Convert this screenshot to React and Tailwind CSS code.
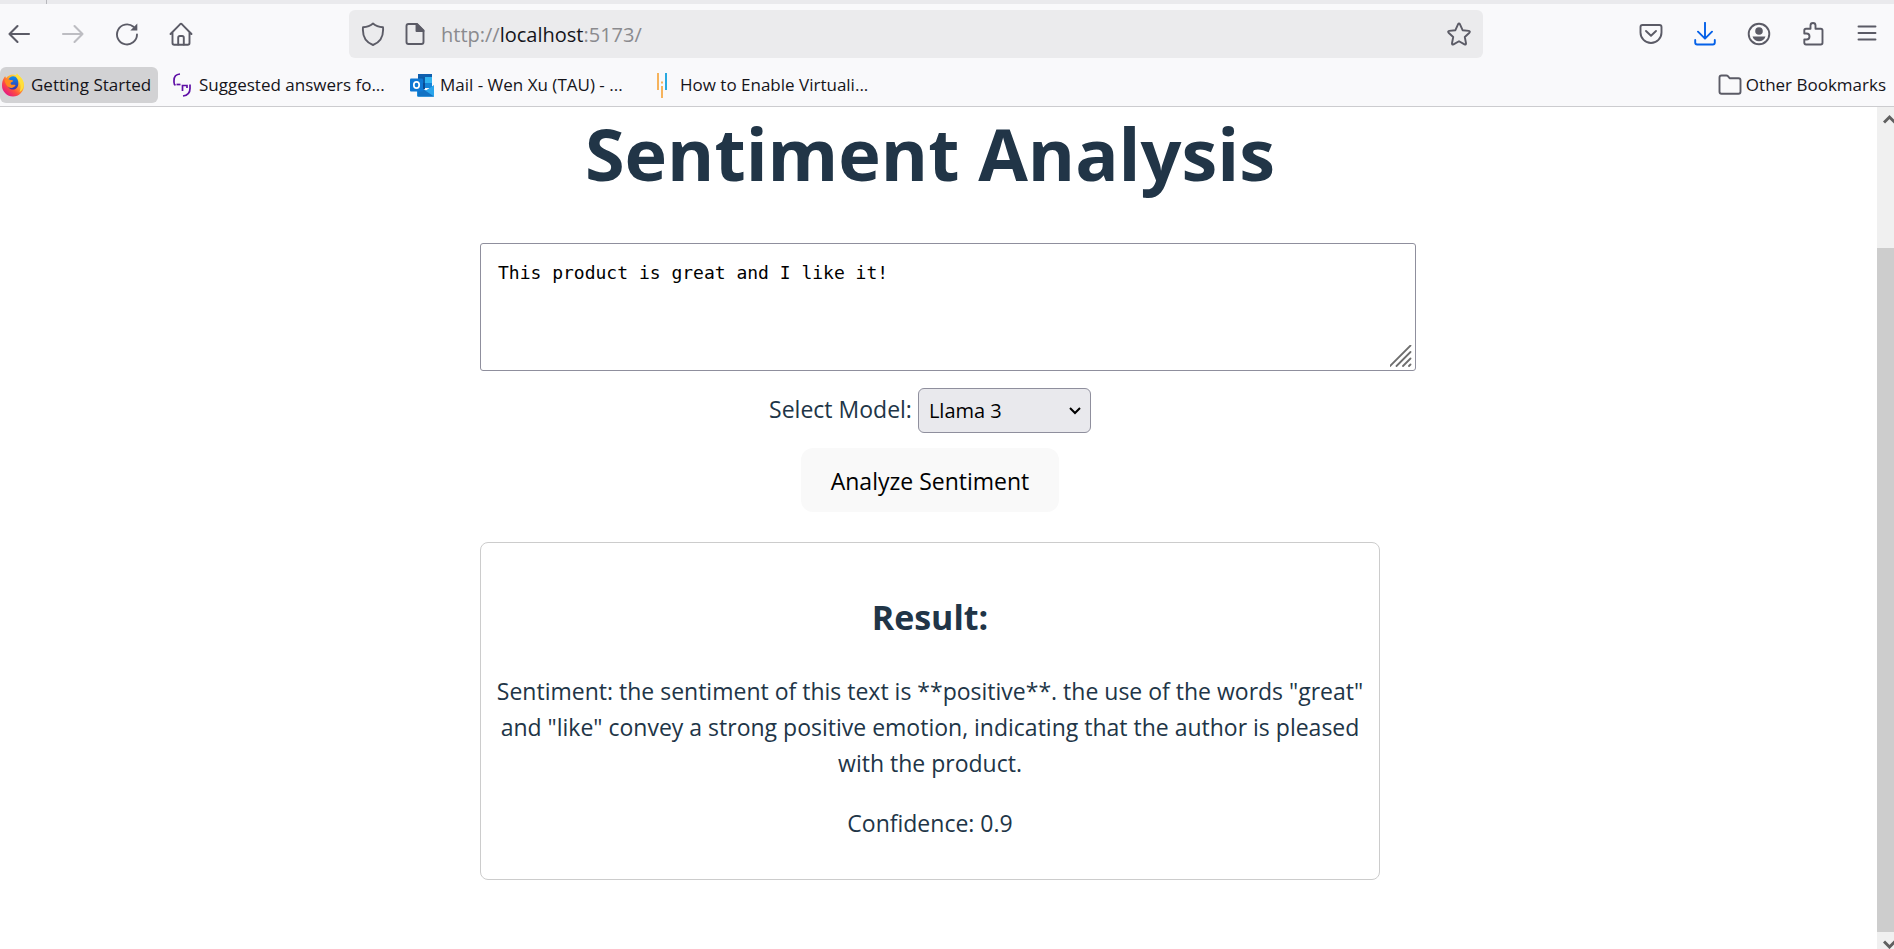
import { useState } from "react";

function Icon({ children, className = "text-[#5b5b66]", size = "size-6" }) {
  return (
    <svg
      viewBox="0 0 24 24"
      className={`${size} shrink-0 ${className}`}
      fill="none"
      stroke="currentColor"
      strokeWidth="1.9"
      strokeLinecap="round"
      strokeLinejoin="round"
      aria-hidden="true"
    >
      {children}
    </svg>
  );
}

function ToolButton({ label, children, disabled }) {
  return (
    <button type="button" aria-label={label} disabled={disabled} className="flex h-12 w-[54px] items-center justify-center">
      {children}
    </button>
  );
}

function FirefoxLogo() {
  return (
    <svg viewBox="0 0 24 24" className="size-6 shrink-0" aria-hidden="true">
      <defs>
        <linearGradient id="ffBody" x1="0.85" y1="0.1" x2="0.15" y2="0.9">
          <stop offset="0" stopColor="#fff44f" />
          <stop offset="0.35" stopColor="#ffb02a" />
          <stop offset="0.65" stopColor="#ff4f3d" />
          <stop offset="1" stopColor="#e31587" />
        </linearGradient>
        <linearGradient id="ffGlobe" x1="0.5" y1="0" x2="0.5" y2="1">
          <stop offset="0" stopColor="#0a8cf0" />
          <stop offset="1" stopColor="#3a2fa8" />
        </linearGradient>
      </defs>
      <path
        d="M2.8 5.2C3.2 4.4 3.7 3.8 4.3 3.3c.1.8.4 1.3.9 1.8C7 3 9.5 1.8 12 1.6l3.5.6C15.3 1.6 15.5 1 16 .6c.9 1.7 2.6 2.6 3.8 3.9 2 2.1 3.2 4.8 3.2 8A11 11 0 0 1 12 23.4 11 11 0 0 1 1 12.5C1 9.7 1.6 7.2 2.8 5.2z"
        fill="url(#ffBody)"
      />
      <path d="M7.5 6.5C8.5 3.6 12 2.2 14.5 3.8c2 1.7 3 4 2.8 7.2-.1 3.5-2.5 5.6-5.3 5.6-3 0-5.2-2-5.3-4.8z" fill="url(#ffGlobe)" />
      <path d="M3.5 7.5C5.5 6 8 6 9.5 7c1.2-.2 2 .1 2.7.7-.5 1.1-1.7 1.3-2.5 2-.3.9.1 1.7 1 2 1.3.4 2.3-.4 3.5.2.4.3.3.8-.1 1.1-1 .8-2 1.9-3.7 1.9-3.4 0-5.4-2.6-6.9-7.4z" fill="#ff8a1f" />
      <path d="M15.5 2.2C15.3 1.6 15.5 1 16 .6c.9 1.7 2.6 2.6 3.8 3.9 2 2.1 3 4.8 2.8 8-.3 3-1.8 5.500-4 6.500 1-3 1.500-6 .4-9-.7-2-3-4.500-3.500-7.800z" fill="#ffe03a" />
    </svg>
  );
}

function SuggestedLogo() {
  return (
    <svg viewBox="0 0 20 24" className="h-6 w-5 shrink-0" fill="none" stroke="#5f0fa6" strokeWidth="1.7" aria-hidden="true">
      <path d="M8 1C4 1.3 2 4 2 7.5v1.7c0 1.5.6 2.6 1.5 3" />
      <path d="M4.5 11.5h4" />
      <path d="M10.5 18v-5.500h4.500v2.500" />
      <path d="M18 11.500v4c0 4-2.300 6.800-7 7.500" />
    </svg>
  );
}

function OutlookLogo() {
  return (
    <svg viewBox="0 0 24 24" className="size-6 shrink-0" aria-hidden="true">
      <path d="M8 1h14v13H8z" fill="#28a8ea" />
      <path d="M8 1h14v3H8z" fill="#0f5fae" />
      <path d="M8 4h7v6H8z" fill="#0c5aa6" />
      <path d="M15 4h7v6h-7z" fill="#32b4f0" />
      <path d="M8 10h7v6H8z" fill="#0a4a94" />
      <path d="M15 10h7v5h-7z" fill="#1484d8" />
      <path d="M7 23.5V12l9 5.5 8-5.3v11.3z" fill="#1a8fe0" />
      <path d="M24 12.2v11.3H8z" fill="#2aa5ec" />
      <path d="M10 14l14 9.5H8V15z" fill="#1272c4" />
      <rect x="0" y="5.5" width="13" height="13" rx="1" fill="#0f78d4" />
      <ellipse cx="6.5" cy="12" rx="2.7" ry="3.2" fill="none" stroke="#fff" strokeWidth="1.7" />
    </svg>
  );
}

function BarsLogo() {
  return (
    <svg viewBox="0 0 12 26" className="h-[26px] w-3 shrink-0" aria-hidden="true">
      <path d="M1 1h2v17H1z" fill="#f6b35c" />
      <path d="M5 14h2v12H5zM5 9.5h2v2H5z" fill="#f6b35c" />
      <path d="M9 1h2v17H9z" fill="#29a9e0" />
    </svg>
  );
}

function Bookmark({ icon, children, className = "" }) {
  return (
    <a href="#" className={`flex h-9 items-center whitespace-nowrap rounded-md text-[17px] text-[#15141a] ${className}`}>
      {icon}
      {children}
    </a>
  );
}

function BrowserBar() {
  return (
    <header className="flex flex-col border-b border-[#cccccf] bg-[#f9f9fb]">
      <div className="flex h-1 bg-[#eaeaed]">
        <div className="w-[47px] border-r border-[#b8b8bd]" />
      </div>
      <div className="flex h-[60px] items-center">
        <nav className="flex w-[349px] shrink-0" aria-label="Navigation">
          <button type="button" aria-label="Back" className="flex h-12 w-[46px] items-center justify-start pl-[7px]">
            <Icon>
              <path d="M22 12H2.5M10.5 4l-8 8 8 8" strokeWidth="2.1" />
            </Icon>
          </button>
          <ToolButton label="Forward" disabled>
            <Icon className="text-[#bdbdc2]">
              <path d="M2 12h19.5M13.5 4l8 8-8 8" strokeWidth="2.1" />
            </Icon>
          </ToolButton>
          <ToolButton label="Reload">
            <Icon>
              <path d="M22 12.5A10 10 0 1 1 18.5 4.8" />
              <path d="M22.3 1.5v7h-7z" fill="currentColor" stroke="none" />
            </Icon>
          </ToolButton>
          <ToolButton label="Home">
            <Icon>
              <path d="M1.5 12 11 2.3q1-.9 2 0L22.5 12M3.5 10v11q0 1.7 1.7 1.7h13.6q1.7 0 1.7-1.7V10" />
              <path d="M9.2 22.5v-6.800q0-1.700 1.700-1.700h2.200q1.700 0 1.700 1.700v6.800" />
            </Icon>
          </ToolButton>
        </nav>
        <div className="flex h-12 min-w-0 flex-1 items-center rounded-md bg-[#ebebed] pl-3">
          <Icon>
            <path d="M12 1.5C14 3.3 18 5 22 5.3c.6 7-1.5 14.5-10 17.7C3.5 19.8 1.4 12.3 2 5.3 6 5 10 3.3 12 1.5z" />
          </Icon>
          <Icon className="ml-[18px] text-[#5b5b66]">
            <path d="M14 2H5.5Q3.5 2 3.5 4v16q0 2 2 2h13q2 0 2-2V8.5z" />
            <path d="M13.5 2v7h7z" fill="currentColor" />
          </Icon>
          <div className="ml-[14px] flex-1 pt-[2px] text-[20px] text-[#8a8a8e]">
            http://<span className="text-[#15141a]">localhost</span>:5173/
          </div>
          <button type="button" aria-label="Bookmark this page" className="flex h-12 w-12 items-center justify-center">
            <Icon>
              <path d="M11 2.3q1-1.6 2 0l2.6 5.9 6.2.7q1.7.4.6 1.8l-4.6 4.3 1.2 6.3q.1 1.7-1.5 1.1L12 19.2l-5.5 3.2q-1.6.6-1.5-1.1L6.2 15 1.6 10.7Q.5 9.3 2.2 8.9l6.2-.7z" />
            </Icon>
          </button>
        </div>
        <div className="flex w-[411px] shrink-0 justify-end">
          <ToolButton label="Save to Pocket">
            <Icon>
              <path d="M3.5 3h17q2 0 2 2v5.5a10.5 10.5 0 0 1-21 0V5q0-2 2-2z" />
              <path d="m7 9 5 4.8L17 9" />
            </Icon>
          </ToolButton>
          <ToolButton label="Downloads">
            <Icon className="text-[#0561e8]">
              <path d="M12 .8v15.4M5 9.7l7 7 7-7M2.2 18v2.5q0 2 2 2h15.6q2 0 2-2V18" />
            </Icon>
          </ToolButton>
          <ToolButton label="Account">
            <Icon>
              <circle cx="12" cy="12" r="10.3" />
              <circle cx="12" cy="9" r="3.8" fill="currentColor" stroke="none" />
              <path d="M5.5 14.5h13c-.8 3-3.5 4.7-6.5 4.7s-5.7-1.7-6.5-4.7z" fill="currentColor" stroke="none" />
            </Icon>
          </ToolButton>
          <ToolButton label="Extensions">
            <Icon>
              <path d="M9.5 6.8V3.5a2.5 2.5 0 0 1 5 0v3.3h5.3q1.7 0 1.7 1.7v12.3q0 1.7-1.7 1.7H5q-1.7 0-1.7-1.7v-3.3h2.2a2.8 2.8 0 0 0 0-6H3.3v-3q0-1.7 1.7-1.7z" />
            </Icon>
          </ToolButton>
          <ToolButton label="Menu">
            <Icon>
              <path d="M3.5 4.5h17M3.5 11h17M3.5 17.5h17" />
            </Icon>
          </ToolButton>
        </div>
      </div>
      <nav className="flex h-[42px] items-center" aria-label="Bookmarks">
        <Bookmark icon={<FirefoxLogo />} className="w-[158px] gap-[6px] bg-[#d2d2d4] pl-px">
          Getting Started
        </Bookmark>
        <Bookmark icon={<SuggestedLogo />} className="ml-[14px] w-[238px] gap-[7px]">
          Suggested answers fo...
        </Bookmark>
        <Bookmark icon={<OutlookLogo />} className="w-[246px] gap-[6px]">
          Mail - Wen Xu (TAU) - ...
        </Bookmark>
        <Bookmark icon={<BarsLogo />} className="gap-3">
          How to Enable Virtuali...
        </Bookmark>
        <Bookmark
          icon={
            <Icon>
              <path d="M3.5 2.5h4.8q1 0 1.6.7l1.7 2h8.900q2 0 2 2v11.600q0 2-2 2h-17q-2 0-2-2V4.500q0-2 2-2z" />
            </Icon>
          }
          className="ml-auto gap-1 pr-2"
        >
          Other Bookmarks
        </Bookmark>
      </nav>
    </header>
  );
}

function ScrollRail() {
  return (
    <div className="flex w-[17px] shrink-0 flex-col overflow-hidden bg-[#f0f0f0]" aria-hidden="true">
      <div className="flex h-[141px] pl-[6px] pt-[7px]">
        <svg viewBox="0 0 13 10" className="h-[10px] w-[13px] shrink-0" fill="none" stroke="#606060" strokeWidth="3">
          <path d="M1 8.5 6.5 3 12 8.5" />
        </svg>
      </div>
      <div className="flex-1 bg-[#cdcdcd]" />
      <div className="flex h-[17px] pl-[6px] pt-[8px]">
        <svg viewBox="0 0 13 10" className="h-[10px] w-[13px] shrink-0" fill="none" stroke="#606060" strokeWidth="3">
          <path d="M1 1.5 6.5 7 12 1.5" />
        </svg>
      </div>
    </div>
  );
}

export default function App() {
  const [text, setText] = useState("This product is great and I like it!");
  const [model, setModel] = useState("llama3");

  return (
    <div className="flex min-h-screen flex-col bg-white font-['Open_Sans','Noto_Sans',sans-serif]">
      <BrowserBar />
      <div className="flex flex-1">
        <main className="flex min-w-0 flex-1 justify-center pr-[17px] text-[#213547]">
          <div className="flex w-full max-w-[900px] flex-col items-center text-[23px] leading-9">
            <h1 className="mt-1 text-center text-[72px] font-bold leading-[84px]">Sentiment Analysis</h1>
            <div className="relative -mr-9 mt-12 self-stretch">
              <textarea
                aria-label="Text to analyze"
                value={text}
                onChange={(e) => setText(e.target.value)}
                className="block h-32 w-full resize-none rounded-[3px] border border-[#8f8f9d] bg-white px-[17px] py-[17px] font-['DejaVu_Sans_Mono',monospace] text-[18px] leading-6 text-black"
              />
              <svg viewBox="0 0 22 22" className="pointer-events-none absolute bottom-1 right-1 size-[22px]" stroke="#6e6e6e" strokeWidth="1.8" strokeLinecap="round" aria-hidden="true">
                <path d="M0 21 20.5.5M6.5 21l14-14M13 21l7.5-7.5M19 21l1.5-1.5" />
              </svg>
            </div>
            <div className="mt-[17px] flex items-center gap-[6px]">
              <label htmlFor="model" className="pb-1">Select Model:</label>
              <div className="relative">
                <select
                  id="model"
                  value={model}
                  onChange={(e) => setModel(e.target.value)}
                  className="block h-[45px] w-[173px] appearance-none rounded-md border border-[#8f8f9d] bg-[#e9e9ed] px-[10px] text-[20px] text-black"
                >
                  <option value="llama3">Llama 3</option>
                </select>
                <svg viewBox="0 0 12 8" className="pointer-events-none absolute right-[10px] top-[19px] h-2 w-3" fill="none" stroke="#000" strokeWidth="2" aria-hidden="true">
                  <path d="m1 1 5 5 5-5" />
                </svg>
              </div>
            </div>
            <button type="button" className="mt-[15px] h-16 w-[258px] rounded-xl bg-[#f9f9f9] pt-[2px] text-[23px] text-black">
              Analyze Sentiment
            </button>
            <section className="mt-[30px] w-full rounded-lg border border-[#ccc] px-3 pb-[38px] pt-[47px] text-center">
              <h2 className="text-[34px] font-bold leading-[54px]">Result:</h2>
              <p className="mt-[29px]">
                Sentiment: the sentiment of this text is **positive**. the use of the words "great" and "like" convey a strong positive emotion, indicating that the author is pleased with the product.
              </p>
              <p className="mt-6">Confidence: 0.9</p>
            </section>
          </div>
        </main>
        <ScrollRail />
      </div>
    </div>
  );
}
